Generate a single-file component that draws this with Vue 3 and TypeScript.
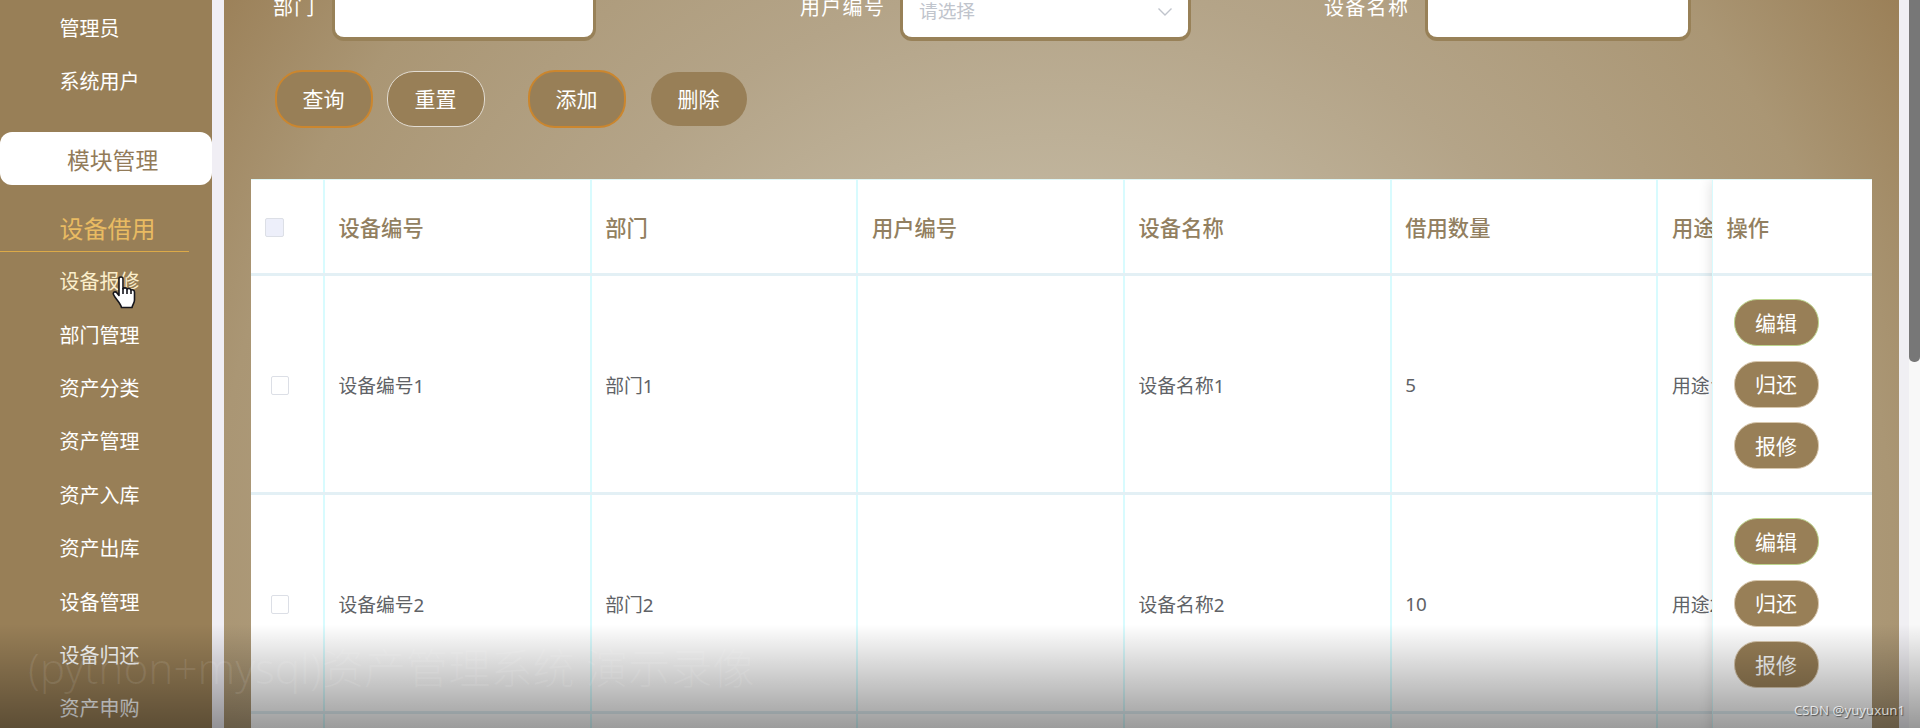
<script setup lang="ts">
interface MenuItem { label: string; state?: 'active' | 'hover' }
interface Row { id: string; code: string; dept: string; user: string; name: string; count: string; usage: string }

const menu: MenuItem[] = [
  { label: '设备报修', state: 'hover' },
  { label: '部门管理' },
  { label: '资产分类' },
  { label: '资产管理' },
  { label: '资产入库' },
  { label: '资产出库' },
  { label: '设备管理' },
  { label: '设备归还' },
  { label: '资产申购' },
]
const columns: string[] = ['设备编号', '部门', '用户编号', '设备名称', '借用数量', '用途']
const rows: Row[] = [
  { id: '1', code: '设备编号1', dept: '部门1', user: '', name: '设备名称1', count: '5', usage: '用途1' },
  { id: '2', code: '设备编号2', dept: '部门2', user: '', name: '设备名称2', count: '10', usage: '用途2' },
]
const actions: string[] = ['编辑', '归还', '报修']
</script>

<template>
  <div class="page">
    <aside class="sidebar">
      <div class="item">管理员</div>
      <div class="item">系统用户</div>
      <div class="group">模块管理</div>
      <div class="current">设备借用</div>
      <div v-for="m in menu" :key="m.label" class="item" :class="m.state">{{ m.label }}</div>
    </aside>
    <div class="gutter"></div>
    <main class="main">
      <form class="filters" @submit.prevent>
        <label class="field f1"><span>部门</span><i class="box"></i></label>
        <label class="field f2"><span>用户编号</span><i class="box select">请选择
          <svg width="16" height="10" viewBox="0 0 16 10"><path d="M1.5 1.5 8 8l6.500-6.500" fill="none" stroke="#c0c4cc" stroke-width="1.400" /></svg>
        </i></label>
        <label class="field f3"><span>设备名称</span><i class="box"></i></label>
      </form>
      <div class="tools">
        <button class="btn orange">查询</button>
        <button class="btn light">重置</button>
        <button class="btn orange add">添加</button>
        <button class="btn plain">删除</button>
      </div>
      <div class="table">
        <div class="scroll">
          <div class="tr head">
            <div class="td check"><i class="cb tinted"></i></div>
            <div v-for="c in columns" :key="c" class="td">{{ c }}</div>
          </div>
          <div v-for="r in rows" :key="r.id" class="tr">
            <div class="td check"><i class="cb"></i></div>
            <div class="td">{{ r.code }}</div>
            <div class="td">{{ r.dept }}</div>
            <div class="td">{{ r.user }}</div>
            <div class="td">{{ r.name }}</div>
            <div class="td">{{ r.count }}</div>
            <div class="td">{{ r.usage }}</div>
          </div>
          <div class="tr"><div class="td check"></div><div v-for="c in columns" :key="c" class="td"></div></div>
        </div>
        <div class="fixed">
          <div class="op head">操作</div>
          <div v-for="r in rows" :key="r.id" class="op">
            <button v-for="a in actions" :key="a" class="mini" :class="{ edit: a === '编辑' }">{{ a }}</button>
          </div>
          <div class="op"></div>
        </div>
      </div>
    </main>
    <div class="track"><div class="rail"><div class="thumb"></div></div></div>

    <div class="shade"></div>
    <div class="caption">(python+mysql)资产管理系统 演示录像</div>
    <div class="credit">CSDN @yuyuxun1</div>
    <svg class="pointer" width="24" height="34" viewBox="0 0 24 34">
      <path d="M7 2.500c0-2 4-2 4 0V13c.3-1.600 4-1.500 4 .5.400-1.500 4-1.300 4 1 .6-1.300 3.500-.8 3.500 1.500v8c0 3-2 4.500-2.500 7.500H9.500C8.500 27 3 22.500 1.500 18.500c-1-2.500 2-3.500 3.500-1.500l2 2.500z" fill="#fff" stroke="#16161c" stroke-width="1.600" stroke-linejoin="round" />
      <path d="M11 12v6M15 13.500V18M19 14.500V18" stroke="#16161c" stroke-width="1.600" />
    </svg>
  </div>
</template>

<style>
body { margin: 0; overflow: hidden; }
</style>

<style scoped>
.page {
  position: relative;
  display: flex;
  width: 1920px;
  height: 728px;
  overflow: hidden;
  font-family: "Noto Sans", "Noto Sans CJK SC", sans-serif;
}
.page * { box-sizing: border-box; }
.sidebar { width: 212px; flex: none; background: #987f57; color: #fff; overflow: hidden; }
.item { height: 53.4px; line-height: 53.4px; padding-left: 59.500px; font-size: 20px; }
.item:first-child { margin-top: 2px; }
.hover { color: #fbeecb; }
.group {
  height: 53px;
  margin-top: 23px;
  padding-left: 67px;
  line-height: 58px;
  font-size: 22.800px;
  color: #927b59;
  background: #fff;
  border-radius: 12px;
}
.current {
  width: 189px;
  height: 52px;
  margin: 15px 0 3.500px;
  padding-left: 59.500px;
  line-height: 58px;
  font-size: 24px;
  color: #e9bb62;
  border-bottom: 1px solid #dcaa48;
}
.gutter { width: 12px; flex: none; background: #f0eef4; }
.main {
  width: 1675px;
  flex: none;
  padding: 0 27px;
  background: radial-gradient(circle 1010px at 830px 560px, #c9c0ad 0%, #c0b49c 37%, #b4a488 57%, #aa9674 83%, #9b8058 100%);
}
.filters { display: flex; height: 69px; color: #fff; }
.field { display: flex; height: 41px; font-size: 20px; }
.field span { line-height: 15px; letter-spacing: 1.300px; white-space: nowrap; }
.f1 { margin-left: 22px; }
.f1 span { width: 59px; }
.f2 { margin-left: 204px; }
.f2 span { width: 100px; }
.f3 { margin-left: 133px; }
.f3 span { width: 101px; }
.box {
  width: 264px;
  height: 41px;
  background: #fff;
  border: 3px solid #988158;
  border-top: 0;
  border-bottom-width: 4px;
  border-radius: 0 0 12px 12px;
  font-style: normal;
}
.f3 .box { width: 266px; }
.select {
  display: flex;
  justify-content: space-between;
  width: 291px;
  padding: 0 15px 0 16px;
  font-size: 18.7px;
  line-height: 22px;
  color: #c0c4cc;
}
.select svg { margin-top: 7px; }
.tools { display: flex; align-items: center; height: 60px; padding-left: 24px; }
.btn, .mini { padding: 0 1px 2px 0; font-family: inherit; font-size: 21px; color: #fff; background: #987f57; }
.btn { width: 98px; height: 58px; border-radius: 27px; }
.orange { border: 2px solid #cb862e; }
.light { height: 56px; margin-left: 14px; border: 1px solid #e2dcd2; }
.add { margin-left: 43px; }
.plain { width: 96px; height: 54px; margin-left: 25px; border: 0; }
.table { position: relative; width: 1621px; margin-top: 50px; background: #fff; overflow: hidden; border-top: 1px solid #dff6f6; }
.scroll { width: 1800px; }
.tr { display: flex; height: 219px; border-bottom: 3px solid #e3f0f5; font-size: 18.800px; color: #606266; }
.tr.head { height: 96px; font-size: 21.300px; font-weight: 500; color: #927f60; }
.td { display: flex; align-items: center; width: 266.700px; padding: 1px 0 0 13.500px; border-right: 2px solid #d8fbfe; flex: none; }
.head .td { padding: 0 0 1px 13.500px; }
.td.check { width: 74px; padding: 2px 0 0 20px; }
.head .td.check { padding-left: 14px; }
.cb { width: 18px; height: 19px; border: 1px solid #dcdfe6; border-radius: 2px; background: #fff; }
.tinted { width: 19px; background: #edeffa; }
.fixed {
  position: absolute;
  top: 0;
  right: 0;
  width: 160px;
  background: #fff;
  border-left: 1px solid #d8fbfe;
  box-shadow: 0 0 13px rgba(0, 0, 0, .14);
}
.op { display: flex; flex-direction: column; height: 219px; padding: 23px 0 0 21px; gap: 14.500px; border-bottom: 3px solid #e3f0f5; }
.op.head { height: 96px; padding: 0 0 1px 13.500px; justify-content: center; font-size: 21.300px; font-weight: 500; color: #927f60; }
.mini { width: 85px; height: 47px; border: 1px solid #d8c8ae; border-radius: 23px; flex: none; }
.edit { border-color: #bdd58d; }
.track { width: 21px; flex: none; padding-left: 10px; background: #f0eff3; }
.rail { height: 728px; background: #f8f8f8; }
.thumb { height: 362px; background: #777; border-radius: 0 0 5px 5px; }
.shade {
  position: absolute;
  left: 0;
  top: 624px;
  width: 1920px;
  height: 104px;
  background: linear-gradient(rgba(0, 0, 0, 0), rgba(0, 0, 0, .39));
}
.caption {
  position: absolute;
  left: 28px;
  top: 639px;
  font-size: 42.200px;
  line-height: 58px;
  font-weight: 300;
  white-space: pre;
  color: rgba(255, 255, 255, .09);
}
.credit {
  position: absolute;
  right: 15px;
  top: 701px;
  font: 13.200px/18px "Noto Sans", sans-serif;
  color: rgba(255, 255, 255, .75);
  text-shadow: 1px 1px 1px rgba(0, 0, 0, .5);
}
.pointer { position: absolute; left: 112px; top: 276px; }
</style>
